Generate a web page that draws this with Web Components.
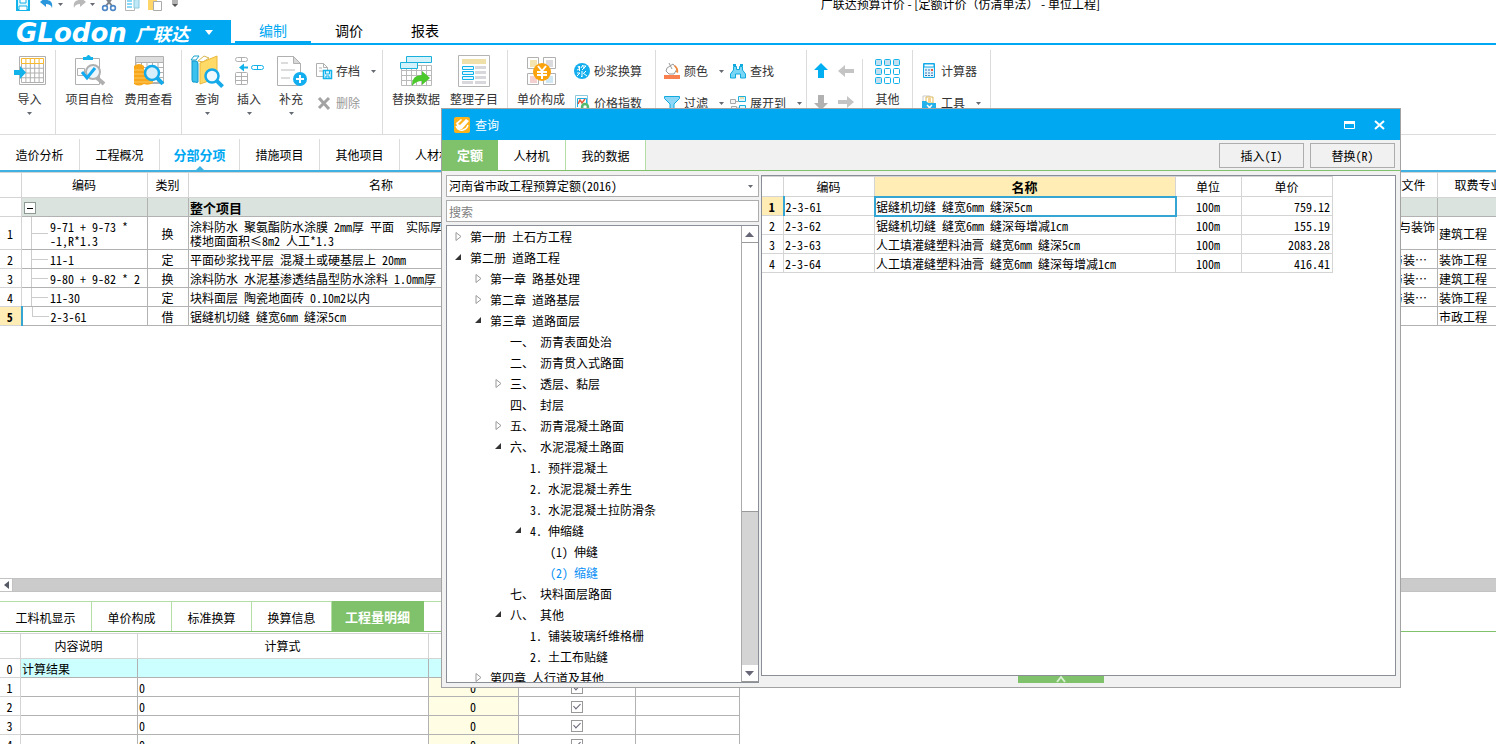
<!DOCTYPE html>
<html lang="zh-CN">
<head>
<meta charset="utf-8">
<title>广联达预算计价</title>
<style>
html,body{margin:0;height:100%;overflow:hidden;background:#fff}
body{
  --blue:#00a8f2;--green:#7fc26b;--line:#b2b2b2;--soft:#d4d4d4;--ink:#000;
  --ui:"Noto Sans CJK SC",sans-serif;
  --mono:"Noto Sans Mono CJK SC","Noto Sans CJK SC",monospace;
  font:12px/16px var(--ui);color:var(--ink)}
</style>
</head>
<body>
<cost-app></cost-app>
<script>
const RESET = `*{box-sizing:border-box}
button{font:inherit;color:inherit;background:none;border:0;padding:0;margin:0}
table{border-collapse:collapse;table-layout:fixed}
svg{display:block;overflow:visible}`;

function define(name, css, html) {
  customElements.define(name, class extends HTMLElement {
    connectedCallback() {
      if (this.shadowRoot) return;
      const root = this.attachShadow({ mode: 'open' });
      root.innerHTML = `<style>${RESET}${css}</style>` + (typeof html === 'function' ? html(this) : html);
    }
  });
}

const grid = (x, y, cols, rows, w, h) => {
  let d = '';
  for (let i = 0; i <= cols; i++) d += `M${x + i * w} ${y}v${rows * h}`;
  for (let j = 0; j <= rows; j++) d += `M${x} ${y + j * h}h${cols * w}`;
  return d;
};
const lens = (x, y, r, c = '#14a9e8', f = '#d6effa') =>
  `<path d="M${x + r * .7} ${y + r * .7}l6 6" stroke="${c}" stroke-width="4"/><circle cx="${x}" cy="${y}" r="${r}" fill="${f}" stroke="${c}" stroke-width="2.5"/>`;

const ICONS = {
  save: [14, `<path d="M1 1h12v12H1z" fill="#e2f6fe" stroke="#12b2ea" stroke-width="2"/><path d="M4 1v5h6V1M3 13V9h8v4" fill="#fff" stroke="#12b2ea"/>`],
  undo: [14, `<path d="M0 5l6-5v3c5 0 7 3 6 8-1-3-3-4-6-4v3z" fill="#2a97dc"/>`],
  redo: [14, `<path d="M14 5L8 0v3C3 3 1 6 2 11c1-3 3-4 6-4v3z" fill="#b9b9b9"/>`],
  cut: [14, `<path d="M3 0l7 9M11 0L4 9" stroke="#7c8188" stroke-width="2"/><circle cx="3" cy="11" r="2.4" fill="#fff" stroke="#4d86c6" stroke-width="1.6"/><circle cx="11" cy="11" r="2.4" fill="#fff" stroke="#4d86c6" stroke-width="1.6"/>`],
  copy: [14, `<path d="M.5.5h9v13h-9z" fill="#fff" stroke="#b5b5b5"/><path d="M2 4h5M2 7h5M2 10h5" stroke="#14b1ec"/><path d="M9 3l5-1v9H9z" fill="#bfe9f6" stroke="#8cc9dc"/>`],
  paste: [14, `<path d="M0 0h9v13H0z" fill="#fdd667"/><path d="M5.500 4.500h8v9h-8z" fill="#fff" stroke="#aaa"/>`],
  more: [6, `<path d="M0 0h6M0 2h6" stroke="#666"/><path d="M0 3h6L3 6z" fill="#555"/>`],
  import: [32, `<path d="M5.500 1.500h26v28h-26z" fill="#fff" stroke="#b0b0b0" stroke-width="1"/><path d="${grid(7.5, 8.500, 5, 4, 4.4, 4.75)}" stroke="#b0b0b0" fill="none"/><path d="${grid(7.5, 3.500, 5, 1, 4.4, 5)}" stroke="#f5b82e" fill="none"/><path d="M0 15h6v-4l6 6.500-6 6.500v-4H0z" fill="#12b2ea"/>`],
  check: [32, `<path d="M1.500 3.500h24v26h-24z" fill="#fff" stroke="#b0b0b0"/><path d="M9 5V2h3l2-2h1l2 2h2v3z" fill="#12b2ea"/><path d="M3.500 13.500h7v7h-7z" fill="none" stroke="#b0b0b0"/><path d="M22 22l8 7" stroke="#b0b0b0" stroke-width="4"/><circle cx="19" cy="17" r="7" fill="#edf6fa" stroke="#b0b0b0" stroke-width="2"/><path d="M8 17l5 6 8-10" fill="none" stroke="#12aaf0" stroke-width="3"/>`],
  cost: [32, `<path d="M2.500 1.500h28v27h-28z" fill="#fff" stroke="#b0b0b0"/><path d="M3 2h27v5H3z" fill="#dededf"/><path d="${grid(3, 7.500, 5, 4, 5.5, 5)}" stroke="#b0b0b0"/><path d="M1 11q5-4 10 0v18q-5 3-10 0zM11 15h9v13q-5 3-9 1z" fill="#f8a71b"/><path d="M1 15h10M1 19h10M1 23h19M1 27h19" stroke="#fdc95e"/>` + lens(19, 18, 7)],
  find: [32, `<path d="M0 5l3-4h5l-3 4z" fill="#fff" stroke="#17a2cc"/><path d="M1 6h4q2 0 2 3v18q0 1-3 0-3 1-3-2z" fill="#3bc1ee" stroke="#1297c8"/><path d="M7 6l6-5 5 2-6 4z" fill="#fff" stroke="#d8b64f"/><path d="M9 8l17-7v22l-17 6z" fill="#ffda67" stroke="#e9b83d"/>` + lens(21, 21, 6.5, '#14a9e8', '#eef9ff')],
  insert: [32, `<g fill="none" stroke="#b0b0b0"><rect x="2.500" y="2.500" width="12" height="4" rx="2"/><path d="M8.500 2.500v4"/><rect x="2.500" y="17.500" width="12" height="12" rx="1"/><path d="M8.500 17v12M2 21.500h12M2 25.500h12"/></g><rect x="18.500" y="10.500" width="12" height="4" rx="2" fill="none" stroke="#12b2ea"/><path d="M24.500 10v5" stroke="#12b2ea"/><path d="M6 12.500l5-4v3h4v2h-4v3z" fill="#12b2ea"/>`],
  add: [32, `<path d="M2.500 1.500h16l7 7v22h-23z" fill="#fff" stroke="#b0b0b0"/><path d="M18.500 1.500v7h7z" fill="#d8d8d8" stroke="#b0b0b0"/><path d="M6 8h7M6 15h14M6 23h9" stroke="#dcdcdc" stroke-width="2"/><circle cx="25" cy="24" r="7" fill="#12aef0"/><path d="M21 24h8M25 20v8" stroke="#fff" stroke-width="2"/>`],
  archive: [16, `<path d="M.5.500h7l4 4v9H.5z" fill="#fff" stroke="#b0b0b0"/><path d="M7.500.5v4h4M3 5h3M3 8h4" fill="none" stroke="#b0b0b0"/><path d="M7.500 7.500h8v8h-8z" fill="#dff5fe" stroke="#12b2ea" stroke-width="1.500"/><path d="M9.500 8v3h4V8M10 15v-2h3v2" fill="none" stroke="#12b2ea"/>`],
  remove: [16, `<path d="M3 3l10 11M13 3L3 13" stroke="#a3a3a3" stroke-width="3"/>`],
  replace: [32, `<path d="${grid(1.500, 10.500, 6, 4, 5, 5)}" stroke="#b9b9b9"/><path d="M6.500 1.500h25v6h-25z" fill="#d3f2fc" stroke="#1ab0dc"/><path d="M.5 7.500h17v6H.5z" fill="#d3f2fc" stroke="#1ab0dc"/><path d="M12 30q0-10 10-10v-4l8 7-8 7v-4q-6 0-10 5z" fill="#4bc82c"/>`],
  arrange: [32, `<path d="M.5.500h31v31H.5z" fill="#fff" stroke="#b4b4b4"/><path d="M4 4h24v5H4z" fill="#efdfa8"/><path d="M17 11h11v3H17zm0 5h11v3H17zm0 5h11v3H17zm0 5h11v3H17zM4 26h11v3H4z" fill="#d8d8dc"/><path d="M4.500 11.500h11v3h-11zm0 5h11v3h-11zm0 5h11v3h-11z" fill="#e4f7fe" stroke="#12b2ea"/>`],
  price: [32, `<g fill="#fff" stroke="#b0b0b0"><path d="M2.500 2.500h11v11h-11zM18.500 2.500h12v11h-12zM2.500 18.500h11v11h-11zM18.500 18.500h12v11h-12z"/></g><path d="M5 5h7v7H5z" fill="#f3e4b0"/><path d="M21 5h7v7h-7z" fill="#dadade"/><path d="M5 21h7v7H5z" fill="#f4cfcf"/><path d="M21 21h7v7h-7z" fill="#cfe6f3"/><circle cx="17" cy="17" r="9" fill="#fba30d"/><path d="M13 11l4 5 4-5M12 17h10M12 20h10M17 16v8" fill="none" stroke="#fff" stroke-width="2"/>`],
  mortar: [16, `<circle cx="8" cy="8" r="8" fill="#12aeee"/><g stroke="#fff" fill="none"><path d="M4 3l1 2M5.500 3v5M3 7l2-1M9 2l-2 3M8 3h4L8 7M9 4l2 1M3 10h3l-3 3M8 8v6l-1-1M9 10l4 3M12 8l-2 2"/></g>`],
  index: [16, `<path d="M1.500.5h12v13h-12z" fill="#fff" stroke="#8cc9dc"/><path d="M3.500 12V3.500h9V8" fill="none" stroke="#12b2ea"/><path d="M4 9l2-4 2 3 3-4" fill="none" stroke="#e8593b" stroke-width="1.500"/><circle cx="11" cy="12" r="3" fill="#fff" stroke="#53b96c" stroke-width="2.500"/>`],
  color: [16, `<path d="M3 5l6-4 4 5-3 5H5L2 8z" fill="#fff" stroke="#999"/><path d="M5 0l3 6" stroke="#999"/><path d="M11 2q4 3 3 8l-2-1q1-3-2-6z" fill="#f08a3c"/><path d="M0 12h16v4H0z" fill="#f9814f"/>`],
  filter: [16, `<path d="M.5 1.500h15v2L10 9v7l-4-3V9L.5 3.500z" fill="#8ed7f7" stroke="#12aadf"/>`],
  search: [16, `<path d="M3.500 3.500h3v3h3v-3h3V7l3 4v4h-5v-4h-5v4h-5v-4l3-4z" fill="#79d6f5" stroke="#0ea9dd"/><path d="M3 2h3M10 2h3" stroke="#0ea9dd" stroke-width="2"/>`],
  expand: [16, `<path d="M.5 4.500h5v4h-5zM1.500 11.500h5v4h-5z" fill="#f5f5f5" stroke="#aaa"/><path d="M8.500 1.500h7v5h-7zM9.500 10.500h6v4h-6z" fill="#e2f6fd" stroke="#1eb0dc"/><path d="M6 6.500h3M7 13h2" stroke="#aaa"/><path d="M10 3h4" stroke="#f4c75d"/>`],
  up: [16, `<path d="M8 0l7 7h-4v8H5V7H1z" fill="#00aef2"/>`],
  down: [16, `<path d="M8 16l7-7h-4V1H5v8H1z" fill="#b1b1b1"/>`],
  left: [16, `<path d="M0 8l7-6v4h9v4H7v4z" fill="#c4c4c4"/>`],
  right: [16, `<path d="M16 8L9 2v4H0v4h9v4z" fill="#c4c4c4"/>`],
  other: [32, (() => { let s = ''; for (let r = 0; r < 3; r++) for (let c = 0; c < 3; c++) s += `<rect x="${3.5 + c * 9}" y="${4.5 + r * 9}" width="6" height="6" rx="1" fill="${r === 0 || c === 0 ? '#c3dff0' : '#fff'}" stroke="#12b2ea"/>`; return s; })()],
  calc: [16, `<path d="M2.500.5h11v14h-11z" fill="#dff3fd" stroke="#12a9e6"/><path d="M3 1h10v3H3z" fill="#fff" stroke="#12a9e6"/><path d="M4 7h2m1 0h2m1 0h2M4 10h2m1 0h2m1 0h2M4 12.500h2m1 0h2m1 0h2" stroke="#3a78b5"/><path d="M10 6h2v2h-2z" fill="#f05a3c"/>`],
  tools: [16, `<path d="M2 1h7v6H2z" fill="#fff" stroke="#c9c9c9"/><path d="M5 2h7v6H5z" fill="#fff" stroke="#ddb95a"/><path d="M7 4h3M7 6h3" stroke="#f0a61e"/><path d="M1 6h4l2 2h8v8H1z" fill="#25b2ea"/><path d="M6 10l5 5M11 10l-5 5" stroke="#fff" stroke-width="1.500"/>`],
  app: [16, `<rect width="16" height="16" rx="2" fill="#fbb21b"/><path d="M2 6l5-4 1 1-4 4 2 1 6-6 3 2-7 8H4z" fill="#fff"/><path d="M2 9q2 5 7 4 4-1 5-5" fill="none" stroke="#fff" stroke-width="1.500"/>`],
};

define('app-icon', `:host{display:block;flex:none}`, el => {
  const [n, body] = ICONS[el.getAttribute('name')];
  return `<svg width="${n}" height="${n}" viewBox="0 0 ${n} ${n}" fill="none" aria-hidden="true">${body}</svg>`;
});

define('drop-arrow', `:host{display:block;flex:none;width:5px;height:3px}`,
  `<svg width="5" height="3"><path d="M0 0h5L2.500 3z" fill="#666a72"/></svg>`);

/* Window caption with the quick-access buttons */
define('title-bar', `
:host{display:flex;height:32px;align-items:center;padding-left:16px}
nav{display:flex;align-items:center;flex:1}
nav button{display:flex;align-items:center;gap:4px;height:16px}
h1{font:inherit;margin:0;padding-right:396px;white-space:nowrap}`, `
<nav>
<button aria-label="保存" style="width:24px"><app-icon name="save"></app-icon></button>
<button aria-label="撤销" style="width:32px"><app-icon name="undo"></app-icon><drop-arrow></drop-arrow></button>
<button aria-label="恢复" style="width:30px"><app-icon name="redo"></app-icon><drop-arrow></drop-arrow></button>
<button aria-label="剪切" style="width:23px"><app-icon name="cut"></app-icon></button>
<button aria-label="复制" style="width:23px"><app-icon name="copy"></app-icon></button>
<button aria-label="粘贴" style="width:24px"><app-icon name="paste"></app-icon></button>
<button aria-label="更多"><app-icon name="more"></app-icon></button>
</nav>
<h1>广联达预算计价 - [定额计价（仿清单法） - 单位工程]</h1>`);

define('brand-bar', `
:host{display:flex;height:25px;border-bottom:2px solid var(--blue)}
.brand{width:231px;height:25px;background:var(--blue);color:#fff;display:flex;align-items:center;justify-content:flex-start;text-align:left;padding-left:16px;margin-right:4px;line-height:24px}
.brand i{font:italic bold 26px/24px "DejaVu Sans",sans-serif;width:119px}
.brand b{font-size:18px;font-weight:700;font-style:italic;width:70px}
.tab{width:76px;font-size:14px;line-height:21px;border-bottom:2px solid transparent;height:23px}
.tab.on{color:var(--blue);border-color:var(--blue)}`, `
<button class="brand" aria-label="Glodon 广联达"><i>GLodon</i><b>广联达</b><svg width="8" height="5"><path d="M0 0h8L4 5z" fill="#fff"/></svg></button>
<button class="tab on">编制</button><button class="tab">调价</button><button class="tab">报表</button>`);

define('ribbon-group', `
:host{display:flex;align-items:flex-start;border-right:1px solid #dcdcdc;margin-top:5px;padding-top:5px;flex:none}
:host([short]){margin-top:14px;padding-top:0}`, `<slot></slot>`);

define('ribbon-button', `
:host{display:block;color:#333}
button{display:flex;align-items:center;white-space:nowrap;height:32px;width:100%}
span{padding:0 11px 0 4px}
:host([large]) button{flex-direction:column;height:66px}
:host([large]) span{padding:0;margin:4px 0 5px;line-height:16px}
:host([disabled]){color:#999}`, el => `
<button><app-icon name="${el.getAttribute('icon')}"></app-icon><span><slot></slot></span>${el.hasAttribute('menu') ? '<drop-arrow></drop-arrow>' : ''}</button>`);

define('ribbon-bar', `
:host{display:flex;height:90px;border-bottom:1px solid #dcdcdc;overflow:hidden}
.col{display:grid;grid-auto-rows:32px}
.pad{display:grid;grid-template-columns:25px 25px;grid-auto-rows:31px;padding-left:6px}
.pad button{height:24px;display:flex;align-items:center;justify-content:flex-start}`, `
<ribbon-group style="width:56px;padding-left:4px"><ribbon-button large menu icon="import" style="width:52px">导入</ribbon-button></ribbon-group>
<ribbon-group style="width:126px;padding-left:4px"><ribbon-button large icon="check" style="width:59px">项目自检</ribbon-button><ribbon-button large icon="cost" style="width:59px">费用查看</ribbon-button></ribbon-group>
<ribbon-group style="width:201px;padding-left:4px"><ribbon-button large menu icon="find" style="width:42px">查询</ribbon-button><ribbon-button large menu icon="insert" style="width:42px">插入</ribbon-button><ribbon-button large menu icon="add" style="width:42px">补充</ribbon-button>
<div class="col" style="margin-left:4px"><ribbon-button menu icon="archive">存档</ribbon-button><ribbon-button disabled icon="remove">删除</ribbon-button></div></ribbon-group>
<ribbon-group style="width:125px;padding-left:4px"><ribbon-button large icon="replace" style="width:58px">替换数据</ribbon-button><ribbon-button large icon="arrange" style="width:58px">整理子目</ribbon-button></ribbon-group>
<ribbon-group style="width:148px;padding-left:4px"><ribbon-button large icon="price" style="width:58px">单价构成</ribbon-button>
<div class="col" style="margin-left:4px"><ribbon-button icon="mortar">砂浆换算</ribbon-button><ribbon-button icon="index">价格指数</ribbon-button></div></ribbon-group>
<ribbon-group style="width:151px;padding-left:8px"><div class="col" style="width:66px"><ribbon-button menu icon="color">颜色</ribbon-button><ribbon-button menu icon="filter">过滤</ribbon-button></div>
<div class="col"><ribbon-button icon="search">查找</ribbon-button><ribbon-button menu icon="expand">展开到</ribbon-button></div></ribbon-group>
<ribbon-group short style="width:56px"><div class="pad"><button aria-label="上移"><app-icon name="up"></app-icon></button><button aria-label="左移"><app-icon name="left"></app-icon></button><button aria-label="下移"><app-icon name="down"></app-icon></button><button aria-label="右移"><app-icon name="right"></app-icon></button></div></ribbon-group>
<ribbon-group style="width:50px"><ribbon-button large icon="other" style="width:49px">其他</ribbon-button></ribbon-group>
<ribbon-group style="width:78px;padding-left:8px"><div class="col"><ribbon-button icon="calc">计算器</ribbon-button><ribbon-button menu icon="tools">工具</ribbon-button></div></ribbon-group>`);

/* Row of page tabs above the main grid */
define('page-tabs', `
:host{display:flex;height:37px;padding-top:4px;border-bottom:2px solid #3fb2e2;font-family:var(--mono)}
button{width:80px;border-right:1px solid #dcdcdc;height:31px;position:relative}
.last{padding-left:15px;text-align:left}
.on{font-size:13px;font-weight:700;color:var(--blue)}
.on::after{content:"";position:absolute;left:36px;bottom:0;border:4px solid transparent;border-top:0;border-bottom-color:#3fb2e2}`, `
<button>造价分析</button><button>工程概况</button><button class="on">分部分项</button><button>措施项目</button><button>其他项目</button><button class="last">人材机</button>`);

const ITEMS = [
  [1, '9-71 + 9-73 *<br>-1,R*1.3', '换', '涂料防水 聚氨酯防水涂膜 2mm厚 平面&nbsp; 实际厚<br>楼地面面积≤8m2 人工*1.3', '建筑与装饰', '建筑工程'],
  [2, '11-1', '定', '平面砂浆找平层 混凝土或硬基层上 20mm', '与装…', '装饰工程'],
  [3, '9-80 + 9-82 * 2', '换', '涂料防水 水泥基渗透结晶型防水涂料 1.0mm厚', '与装…', '建筑工程'],
  [4, '11-30', '定', '块料面层 陶瓷地面砖 0.10m2以内', '与装…', '装饰工程'],
  [5, '2-3-61', '借', '锯缝机切缝 缝宽6mm 缝深5cm', '', '市政工程'],
];

define('item-grid', `
:host{display:block;flex:1;min-height:0;overflow:hidden;font-family:var(--mono);line-height:14px}
table{width:calc(100% + 26px);margin-left:-1px}
th,td{border:1px solid var(--line);padding:2px 2px 0 1px;height:19px;white-space:nowrap;overflow:hidden;font-weight:400;text-align:left}
thead th{height:25px;padding-top:0;text-align:center;border-color:var(--soft)}
tbody th{text-align:center;border-color:var(--soft)}
.g td{background:#dae3de;font-size:13px;font-weight:700}
.tall td,.tall th{height:33px}
td.c{text-align:center}
td.code{padding-left:28px;position:relative}
.code::before{content:"";position:absolute;left:9px;top:0;bottom:-1px;border-left:1px solid #ccc}
.code::after{content:"";position:absolute;left:9px;top:50%;width:17px;border-top:1px solid #ccc}
tbody tr:last-child .code::before{bottom:50%}
tbody tr:last-child th{background:#ffedb5;font-weight:700;border-right:2px solid #35a5d3}
td.fee{text-align:right;padding-right:10px}
.tall td.fee{padding:0 2px 12px}
.g button{display:block;width:12px;height:12px;border:1px solid #8d9a94;background:#fff;padding:0 2px;margin-left:1px}
.g i{display:block;height:1px;background:#000}`, () => `
<table><colgroup><col style="width:22px"><col style="width:126px"><col style="width:41px"><col style="width:386px"><col><col style="width:71px"><col style="width:83px"></colgroup>
<thead><tr><th></th><th>编码</th><th>类别</th><th>名称</th><th></th><th>取费文件</th><th>取费专业</th></tr></thead>
<tbody><tr class="g"><th></th><td><button aria-label="折叠"><i></i></button></td><td></td><td>整个项目</td><td></td><td></td><td></td></tr>
${ITEMS.map(r => `<tr class="${r[0] === 1 ? 'tall' : ''}"><th>${r[0]}</th><td class="code">${r[1]}</td><td class="c">${r[2]}</td><td>${r[3]}</td><td></td><td class="fee">${r[4]}</td><td>${r[5]}</td></tr>`).join('')}
</tbody></table>`);

define('h-scroll', `
:host{display:flex;height:14px;background:#cbcbcb;border:solid #c2c2c2;border-width:1px 0}
button{width:13px;height:12px;background:#fff;border-right:1px solid #c2c2c2;padding:2px 4px}`, `
<button aria-label="向左滚动"><svg width="5" height="8"><path d="M5 0v8L0 4z" fill="#555a66"/></svg></button>`);

const CHECK = `
input[type=checkbox]{appearance:none;margin:0 auto;display:block;width:12px;height:12px;border:1px solid #999;background:#fff;position:relative}
input[type=checkbox]:checked::after{content:"";position:absolute;left:3px;top:0;width:3px;height:6px;border:solid #667;border-width:0 1px 1px 0;transform:rotate(45deg)}`;

define('detail-panel', `
:host{display:block;flex:none;height:143px;margin-top:9px;overflow:hidden;font-family:var(--mono)}
nav{display:flex;border-bottom:1px solid var(--green);height:31px;margin-bottom:1px}
nav button{width:80px;border:solid #b3dea5;border-width:1px 1px 0 0;padding-top:2px}
nav button:first-child{width:92px}
nav .on{width:92px;background:var(--green);color:#fff;font-size:13px;font-weight:700;border-color:var(--green);padding:0}
table{width:741px;margin-left:-1px}
th,td{border:1px solid var(--line);height:19px;padding:2px 2px 0 1px;font-weight:400;text-align:left;line-height:14px}
td:nth-child(6){padding:0}
thead th{height:25px;padding-top:0;text-align:center;border-color:var(--soft)}
tbody th{text-align:center;border-color:var(--soft)}
td:nth-child(4){background:#fffee4;text-align:center}
tr.sum td{background:#ccffff}${CHECK}`, () => `
<nav><button>工料机显示</button><button>单价构成</button><button>标准换算</button><button>换算信息</button><button class="on">工程量明细</button><button aria-label="工程内容"></button></nav>
<table><colgroup><col style="width:21px"><col style="width:117px"><col style="width:291px"><col style="width:90px"><col style="width:117px"><col style="width:104px"></colgroup>
<thead><tr><th></th><th>内容说明</th><th>计算式</th><th></th><th></th><th></th></tr></thead>
<tbody><tr class="sum"><th>0</th><td>计算结果</td><td></td><td></td><td></td><td></td></tr>
${[1, 2, 3, 4].map(n => `<tr><th>${n}</th><td></td><td>0</td><td>0</td><td><input type="checkbox" checked aria-label="累加第${n}行"></td><td></td></tr>`).join('')}
</tbody></table>`);

/* level, state (c collapsed, e expanded, empty leaf), label */
const TREE = [
  [0, 'c', '第一册 土石方工程'], [0, 'e', '第二册 道路工程'], [1, 'c', '第一章 路基处理'], [1, 'c', '第二章 道路基层'],
  [1, 'e', '第三章 道路面层'], [2, '', '一、 沥青表面处治'], [2, '', '二、 沥青贯入式路面'], [2, 'c', '三、 透层、黏层'],
  [2, '', '四、 封层'], [2, 'c', '五、 沥青混凝土路面'], [2, 'e', '六、 水泥混凝土路面'], [3, '', '1. 预拌混凝土'],
  [3, '', '2. 水泥混凝土养生'], [3, '', '3. 水泥混凝土拉防滑条'], [3, 'e', '4. 伸缩缝'], [4, '', '(1) 伸缝'],
  [4, 'on', '(2) 缩缝'], [2, '', '七、 块料面层路面'], [2, 'e', '八、 其他'], [3, '', '1. 铺装玻璃纤维格栅'],
  [3, '', '2. 土工布贴缝'], [1, 'c', '第四章 人行道及其他'],
];
const MARK = {
  c: `<svg width="7" height="9"><path d="M1 .5v8l5-4z" fill="#fff" stroke="#999"/></svg>`,
  e: `<svg width="7" height="7"><path d="M6 0v6H0z" fill="#333"/></svg>`,
};

define('quota-tree', `
:host{display:flex;flex:1;min-height:0;border:1px solid #8a8e96;background:#fff;overflow:hidden}
ul{flex:1;margin:0;padding:0;list-style:none;overflow:hidden}
li{height:21px;line-height:21px;display:flex;align-items:center;white-space:pre;padding-left:calc(8px + 20px * var(--l))}
li span{width:15px;flex:none}
.on{color:#0a90f5}
.bar{width:17px;background:#d4d4d4;display:flex;flex-direction:column;border-left:1px solid #aaa}
.bar button{height:17px;flex:none;background:#fff;border-bottom:1px solid #999;padding:5px 3px}
.bar i{flex:0 0 59%;background:#fff;border-bottom:1px solid #999;margin-bottom:auto}`, () => `
<ul role="tree">${TREE.map(([l, s, t]) => `<li role="treeitem" style="--l:${l}" class="${s}"><span>${MARK[s] || ''}</span>${t}</li>`).join('')}</ul>
<div class="bar"><button aria-label="向上滚动"><svg width="9" height="5"><path d="M0 5h9L4.500 0z" fill="#667"/></svg></button><i></i><button aria-label="向下滚动"><svg width="9" height="5"><path d="M0 0h9L4.500 5z" fill="#667"/></svg></button></div>`);

const QUOTAS = [
  ['2-3-61', '锯缝机切缝 缝宽6mm 缝深5cm', '759.12'], ['2-3-62', '锯缝机切缝 缝宽6mm 缝深每增减1cm', '155.19'],
  ['2-3-63', '人工填灌缝塑料油膏 缝宽6mm 缝深5cm', '2083.28'], ['2-3-64', '人工填灌缝塑料油膏 缝宽6mm 缝深每增减1cm', '416.41'],
];

define('quota-grid', `
:host{display:block;flex:1;border:1px solid #8a8e96;background:#fff;overflow:hidden}
table{width:572px;margin-left:-1px}
th,td{border:1px solid var(--soft);height:19px;padding:2px 2px 0 1px;font-weight:400;line-height:14px;text-align:left;white-space:nowrap}
thead th{height:20px;padding-top:0;text-align:center}
tbody th{text-align:center}
td:nth-child(4){text-align:center}
td:nth-child(5){text-align:right}
thead .hot{background:#ffedb5;font-weight:700;font-size:13px}
tbody tr:first-child th{background:#ffedb5;font-weight:700;border-right:2px solid #35a5d3}
tbody tr:first-child td:nth-child(3){outline:2px solid #35a5d3;outline-offset:-1px}`, () => `
<table><colgroup><col style="width:22px"><col style="width:91px"><col style="width:301px"><col style="width:66px"><col style="width:91px"></colgroup>
<thead><tr><th></th><th>编码</th><th class="hot">名称</th><th>单位</th><th>单价</th></tr></thead>
<tbody>${QUOTAS.map((q, i) => `<tr><th>${i + 1}</th><td>${q[0]}</td><td>${q[1]}</td><td>100m</td><td>${q[2]}</td></tr>`).join('')}</tbody></table>`);

define('query-dialog', `
:host{position:absolute;left:441px;right:95px;top:108px;bottom:56px;display:flex;flex-direction:column;background:#f1f1f1;border:1px solid #a2a2a2;font-family:var(--mono);box-sizing:border-box}
header{height:31px;background:var(--blue);color:#fff;display:flex;align-items:center;padding:0 14px 0 12px;flex:none}
header h2{font:inherit;margin:0 0 0 5px;flex:1}
header button{width:12px;height:12px;margin-left:18px}
nav{display:flex;height:31px;border-bottom:1px solid var(--green);flex:none}
nav button{background:#fff;border-right:1px solid #b3dea5;padding-top:2px}
nav .on{background:var(--green);color:#fff;font-size:13px;font-weight:700;border:0;padding:0}
nav .act{width:85px;height:25px;margin:3px 0 0 6px;padding:0;border:1px solid #adadad;background:#f1f1f1}
nav .fill{flex:1}
main{flex:1;display:flex;gap:2px;min-height:0;padding:4px}
.left{width:313px;display:flex;flex-direction:column;gap:3px}
.sel{display:flex;position:relative}
.sel drop-arrow{position:absolute;right:6px;top:10px}
select,input{appearance:none;font:inherit;width:100%;height:22px;border:1px solid #adadad;background:#fff;border-radius:0;padding:0 2px;margin:0;color:#000;outline:0}
input::placeholder{color:#808080;opacity:1}
.right{flex:1;display:flex;flex-direction:column}
.fold{width:86px;height:7px;background:var(--green);margin:0 0 0 257px;display:flex;justify-content:center}`, `
<header><app-icon name="app"></app-icon><h2>查询</h2>
<button aria-label="最大化"><svg width="11" height="8"><path d="M.5.500h10v7H.5z" fill="none" stroke="#fff"/><path d="M0 0h11v3H0z" fill="#fff"/></svg></button>
<button aria-label="关闭"><svg width="11" height="10"><path d="M1 1l9 8M10 1L1 9" stroke="#fff" stroke-width="2"/></svg></button></header>
<nav><button class="on" style="width:56px">定额</button><button style="width:68px">人材机</button><button style="width:80px">我的数据</button><span class="fill"></span><button class="act">插入(I)</button><button class="act" style="margin-right:5px">替换(R)</button></nav>
<main><div class="left"><div class="sel"><select aria-label="定额库"><option>河南省市政工程预算定额(2016)</option></select><drop-arrow></drop-arrow></div>
<input type="text" placeholder="搜索" aria-label="搜索"><quota-tree></quota-tree></div>
<div class="right"><quota-grid></quota-grid><button class="fold" aria-label="收起"><svg width="10" height="7"><path d="M1 6l4-5 4 5" fill="none" stroke="#d8efd0" stroke-width="2"/></svg></button></div></main>`);

define('cost-app', `
:host{display:flex;flex-direction:column;height:calc(100vh + 12px);margin-top:-12px}
title-bar,brand-bar,ribbon-bar,page-tabs,h-scroll{flex:none}`, `
<title-bar></title-bar><brand-bar></brand-bar><ribbon-bar></ribbon-bar><page-tabs></page-tabs>
<item-grid></item-grid><h-scroll></h-scroll><detail-panel></detail-panel><query-dialog></query-dialog>`);
</script>
</body>
</html>
